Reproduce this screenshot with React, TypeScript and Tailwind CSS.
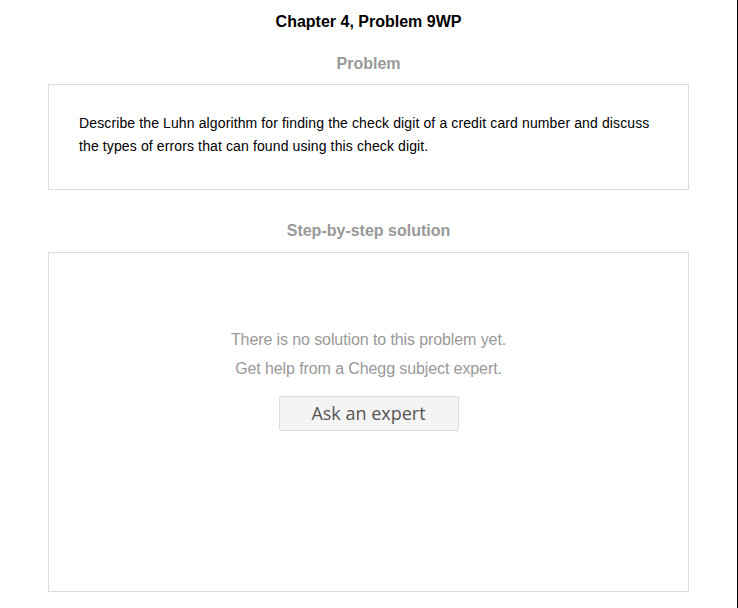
export default function App() {
  return (
    <div className="w-[738px] h-[608px] bg-white border-r border-black overflow-hidden font-['Liberation_Sans',Arial,sans-serif]">
      <h1 className="pt-[12px] text-center text-[16px] leading-[19px] font-bold text-black">
        Chapter 4, Problem 9WP
      </h1>
      <h2 className="mt-[23px] text-center text-[16px] leading-[19px] font-bold text-[#999999]">
        Problem
      </h2>
      <div className="mx-[48px] mt-[11px] border border-[#dddddd] h-[106px] px-[30px] pt-[27px]">
        <p className="text-[14px] leading-[23px] tracking-[0.12px] text-black">
          Describe the Luhn algorithm for finding the check digit of a credit card number and discuss the types of errors
          that can found using this check digit.
        </p>
      </div>
      <h2 className="mt-[31px] text-center text-[16px] leading-[19px] font-bold text-[#999999]">
        Step-by-step solution
      </h2>
      <div className="mx-[48px] mt-[12px] border border-[#dddddd] h-[340px] flex flex-col items-center pt-[72px]">
        <p className="text-[16px] leading-[29px] tracking-[-0.1px] text-[#999999]">There is no solution to this problem yet.</p>
        <p className="text-[16px] leading-[29px] tracking-[-0.1px] text-[#999999]">Get help from a Chegg subject expert.</p>
        <button className="mt-[13px] w-[180px] h-[35px] bg-[#f4f4f4] border border-[#dcdcdc] rounded-[2px] text-[18px] text-[#555555] font-['Open_Sans',sans-serif]">
          Ask an expert
        </button>
      </div>
    </div>
  );
}
